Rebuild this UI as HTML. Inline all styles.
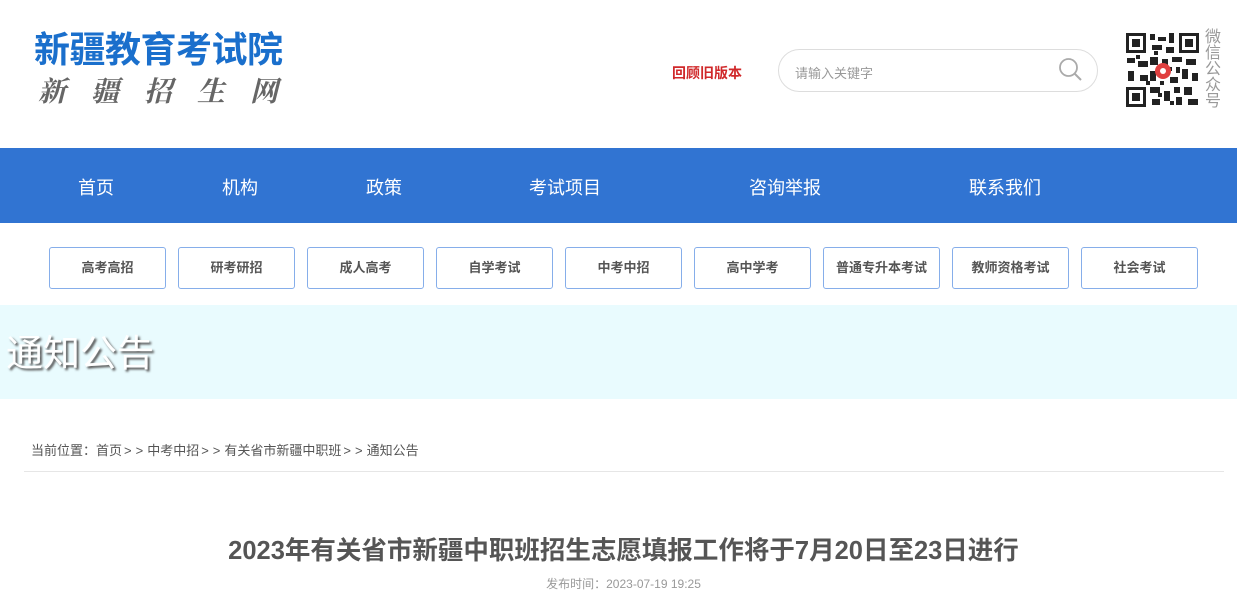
<!DOCTYPE html>
<html><head><meta charset="utf-8"><style>
*{margin:0;padding:0;box-sizing:border-box}
body{width:1237px;height:610px;overflow:hidden;background:#fff;font-family:"Liberation Sans","Noto Sans CJK SC",sans-serif;position:relative}
.a{position:absolute}
.nav{top:148px;left:0;width:1237px;height:75px;background:#3174d2}
.nav span{position:absolute;top:26px;color:#fff;font-size:18px;transform:translateX(-50%);white-space:nowrap}
.btn{position:absolute;top:247px;width:117px;height:42px;border:1px solid #86aeea;border-radius:3px;text-align:center;line-height:40px;font-size:13px;color:#555;font-weight:bold}
.g{letter-spacing:4px;padding-left:2px}
</style></head><body>
<div class="a" style="left:34px;top:28px;font-size:36px;font-weight:bold;color:#1a6fcc;letter-spacing:-0.5px;line-height:44px">新疆教育考试院</div>
<div class="a" style="left:38px;top:72px;font-size:28px;color:#666;font-family:'Noto Serif CJK SC',serif;font-weight:bold;letter-spacing:25px;line-height:36px;font-style:italic">新疆招生网</div>
<div class="a" style="left:672px;top:63px;font-size:14px;color:#d0282a;font-weight:bold">回顾旧版本</div>
<div class="a" style="left:778px;top:49px;width:320px;height:43px;border:1px solid #ddd;border-radius:22px"></div>
<div class="a" style="left:795px;top:63px;font-size:13px;color:#999">请输入关键字</div>
<svg class="a" style="left:1058px;top:57px" width="26" height="26" viewBox="0 0 26 26"><circle cx="10.5" cy="10.5" r="8.5" fill="none" stroke="#aaa" stroke-width="1.8"/><line x1="16.5" y1="16.5" x2="23" y2="23" stroke="#aaa" stroke-width="2"/></svg>
<svg class="a" style="left:1124px;top:31px" width="77" height="78" viewBox="0 0 77 78">
<rect width="77" height="78" fill="#fff"/>
<g fill="#222">
<rect x="2" y="2" width="20" height="20"/><rect x="55" y="2" width="20" height="20"/><rect x="2" y="56" width="20" height="20"/>
</g>
<g fill="#fff"><rect x="5" y="5" width="14" height="14"/><rect x="58" y="5" width="14" height="14"/><rect x="5" y="59" width="14" height="14"/></g>
<g fill="#222"><rect x="8" y="8" width="8" height="8"/><rect x="61" y="8" width="8" height="8"/><rect x="8" y="62" width="8" height="8"/>
<rect x="26" y="3" width="5" height="6"/><rect x="34" y="6" width="8" height="4"/><rect x="45" y="2" width="5" height="10"/><rect x="28" y="14" width="10" height="5"/><rect x="42" y="16" width="8" height="6"/>
<rect x="3" y="27" width="8" height="5"/><rect x="14" y="30" width="10" height="6"/><rect x="4" y="40" width="6" height="10"/><rect x="16" y="44" width="8" height="6"/>
<rect x="26" y="26" width="8" height="8"/><rect x="38" y="28" width="6" height="6"/><rect x="48" y="26" width="10" height="5"/><rect x="62" y="28" width="10" height="6"/><rect x="58" y="38" width="6" height="10"/><rect x="68" y="42" width="6" height="8"/>
<rect x="26" y="40" width="6" height="10"/><rect x="46" y="46" width="8" height="6"/><rect x="26" y="56" width="10" height="6"/><rect x="40" y="60" width="6" height="10"/><rect x="50" y="56" width="6" height="6"/><rect x="60" y="56" width="8" height="8"/><rect x="28" y="68" width="8" height="6"/><rect x="52" y="66" width="6" height="8"/><rect x="64" y="68" width="10" height="6"/>
<rect x="12" y="24" width="4" height="4"/><rect x="30" y="20" width="4" height="4"/><rect x="36" y="50" width="4" height="4"/><rect x="22" y="50" width="4" height="4"/><rect x="44" y="36" width="4" height="4"/><rect x="52" y="36" width="4" height="6"/><rect x="34" y="62" width="4" height="4"/><rect x="46" y="70" width="4" height="4"/></g>
<circle cx="39" cy="40" r="8" fill="#e04040"/><circle cx="39" cy="40" r="3" fill="#fff"/>
</svg>
<div class="a" style="left:1205px;top:30px;width:18px;font-size:16px;line-height:16px;color:#999">微信公众号</div>
<div class="a nav">
<span style="left:96px">首页</span><span style="left:240px">机构</span><span style="left:384px">政策</span><span style="left:565px">考试项目</span><span style="left:785px">咨询举报</span><span style="left:1005px">联系我们</span>
</div>
<div class="btn" style="left:49px">高考高招</div>
<div class="btn" style="left:178px">研考研招</div>
<div class="btn" style="left:307px">成人高考</div>
<div class="btn" style="left:436px">自学考试</div>
<div class="btn" style="left:565px">中考中招</div>
<div class="btn" style="left:694px">高中学考</div>
<div class="btn" style="left:823px">普通专升本考试</div>
<div class="btn" style="left:952px">教师资格考试</div>
<div class="btn" style="left:1081px">社会考试</div>
<div class="a" style="left:0;top:305px;width:1237px;height:94px;background:#e9fbfe"></div>
<div class="a" style="left:6px;top:332px;font-size:37px;color:#fff;text-shadow:2px 2px 2px #555;line-height:44px">通知公告</div>
<div class="a" style="left:31px;top:440px;font-size:13px;color:#555;white-space:nowrap">当前位置：首页<span class="g">&gt;&gt;</span>中考中招<span class="g">&gt;&gt;</span>有关省市新疆中职班<span class="g">&gt;&gt;</span>通知公告</div>
<div class="a" style="left:24px;top:471px;width:1200px;height:1px;background:#e6e6e6"></div>
<div class="a" style="left:0;top:530px;width:1247px;text-align:center;font-size:25.5px;font-weight:bold;color:#555">2023年有关省市新疆中职班招生志愿填报工作将于7月20日至23日进行</div>
<div class="a" style="left:0;top:575px;width:1247px;text-align:center;font-size:12px;color:#999">发布时间：2023-07-19 19:25</div>
</body></html>
